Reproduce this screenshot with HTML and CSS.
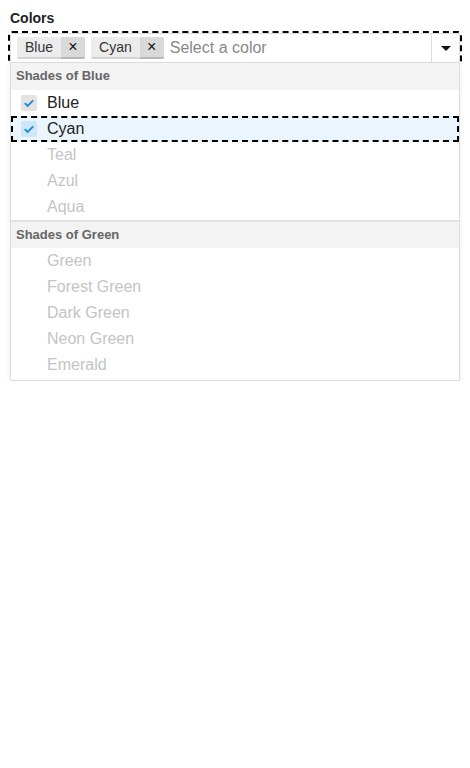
FILE: index.html
```html
<!DOCTYPE html>
<html lang="en">
<head>
<meta charset="utf-8">
<title>Colors</title>
<link rel="stylesheet" href="styles.css">
</head>
<body>
<div class="field">
  <label class="label">Colors</label>
  <div class="combo">
    <div class="control">
      <div class="values">
        <span class="chip"><span class="chip-text">Blue</span><span class="chip-x">×</span></span>
        <span class="chip"><span class="chip-text">Cyan</span><span class="chip-x">×</span></span>
        <span class="placeholder">Select a color</span>
      </div>
      <div class="toggle"><span class="caret"></span></div>
    </div>
    <div class="menu">
      <div class="group">Shades of Blue</div>
      <div class="item"><span class="check on"><svg viewBox="0 0 16 16" width="16" height="16"><path d="M3.8 8.2l2.8 2.8L12.2 5.4" fill="none" stroke="#1b8ad6" stroke-width="1.9"/></svg></span><span>Blue</span></div>
      <div class="item active"><span class="check on blue"><svg viewBox="0 0 16 16" width="16" height="16"><path d="M3.8 8.2l2.8 2.8L12.2 5.4" fill="none" stroke="#1b8ad6" stroke-width="1.9"/></svg></span><span>Cyan</span></div>
      <div class="item off"><span class="check"></span><span>Teal</span></div>
      <div class="item off"><span class="check"></span><span>Azul</span></div>
      <div class="item off"><span class="check"></span><span>Aqua</span></div>
      <div class="group sep">Shades of Green</div>
      <div class="item off"><span class="check"></span><span>Green</span></div>
      <div class="item off"><span class="check"></span><span>Forest Green</span></div>
      <div class="item off"><span class="check"></span><span>Dark Green</span></div>
      <div class="item off"><span class="check"></span><span>Neon Green</span></div>
      <div class="item off"><span class="check"></span><span>Emerald</span></div>
    </div>
  </div>
</div>
</body>
</html>
```

FILE: styles.css
```css
* { box-sizing: border-box; }
html, body { margin: 0; padding: 0; background: #fff; }
body {
  font-family: "Liberation Sans", Arial, sans-serif;
  color: #222;
  padding: 10px 10px 0 10px;
}
.field { display: flex; flex-direction: column; }
.label {
  font-weight: bold;
  font-size: 14px;
  line-height: 16px;
  color: #222;
  margin-bottom: 7px;
}
.combo { display: flex; flex-direction: column; }
.control {
  display: flex;
  height: 30px;
  border: 1px solid #ddd;
  border-radius: 2px;
  outline: 2px dashed #000;
  background: #fff;
}
.values {
  flex: 1;
  display: flex;
  align-items: center;
  gap: 6px;
  padding-left: 6px;
}
.chip {
  display: flex;
  height: 22px;
  background: #ececec;
  border-radius: 2px;
  font-size: 14px;
  line-height: 20px;
  color: #333;
  overflow: hidden;
}
.chip-text { padding: 0 8px; border-bottom: 2px solid #d4d4d4; }
.chip-x {
  width: 24px;
  text-align: center;
  background: #d9d9d9;
  border-bottom: 2px solid #b8b8b8;
  font-size: 16px;
  color: #111;
}
.placeholder {
  font-size: 16px;
  color: #888;
}
.toggle {
  width: 28px;
  border-left: 1px solid #ddd;
  display: flex;
  align-items: center;
  justify-content: center;
}
.caret {
  width: 0; height: 0;
  border-left: 5px solid transparent;
  border-right: 5px solid transparent;
  border-top: 5px solid #111;
  margin-left: 1px;
}
.menu {
  position: relative;
  z-index: 1;
  margin-top: -1px;
  padding-bottom: 2px;
  background: #fff;
  border: 1px solid #ddd;
  border-radius: 0 0 2px 2px;
  box-shadow: 0 2px 5px rgba(0,0,0,0.08);
}
.group {
  height: 27px;
  background: #f3f3f3;
  font-size: 13px;
  font-weight: bold;
  color: #666;
  padding-left: 5px;
  line-height: 26px;
}
.group.sep { border-top: 2px solid #e2e2e2; height: 28px; line-height: 26px; }
.item {
  display: flex;
  align-items: center;
  height: 26px;
  font-size: 16px;
  color: #222;
  padding-left: 10px;
}
.item.active {
  background: #ebf5fd;
  outline: 2px dashed #000;
  outline-offset: -2px;
}
.item.off { color: #c4c4c4; }
.check {
  width: 16px; height: 16px;
  margin-right: 10px;
  border-radius: 2px;
  display: flex;
}
.check.on { background: #e3e3e3; }
.check.on.blue { background: #cde6f8; }
```
